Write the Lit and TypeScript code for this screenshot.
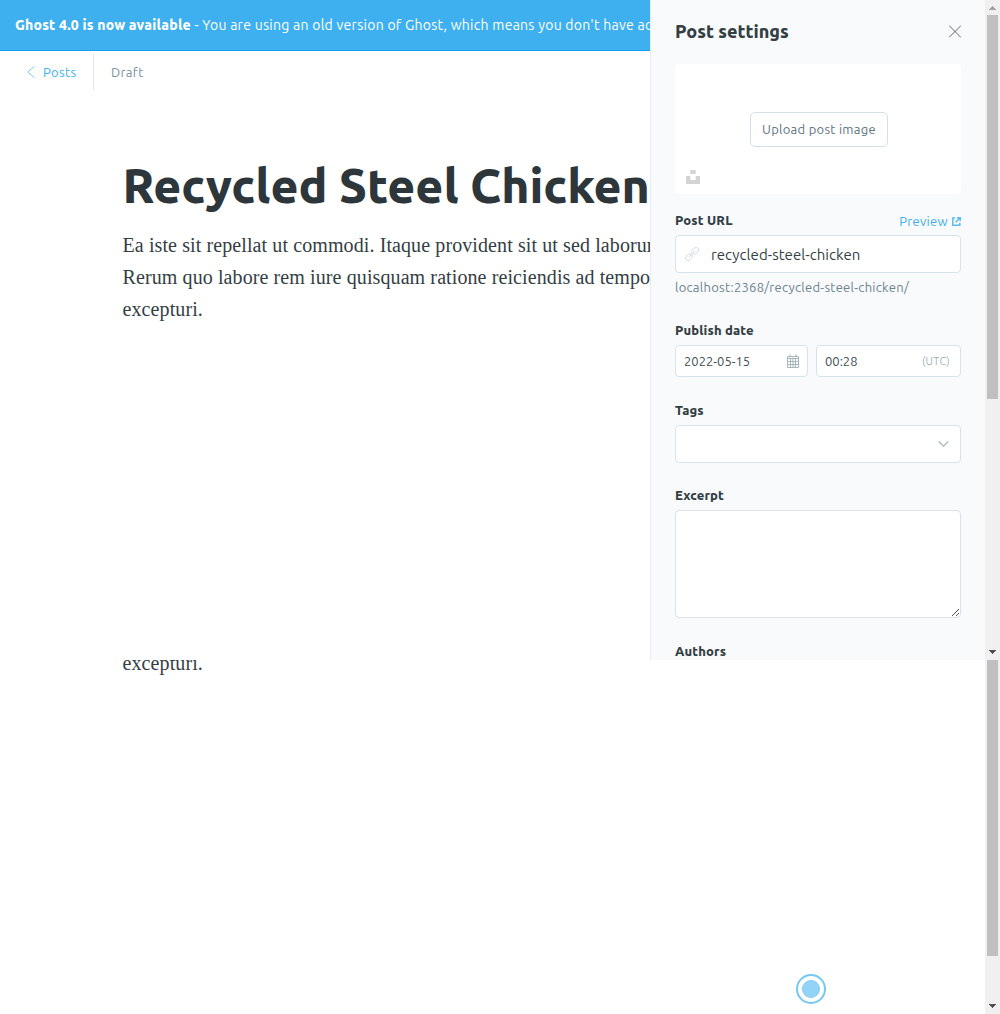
import { LitElement, html, css, svg } from "lit";
import { customElement, property } from "lit/decorators.js";

const LINES = [
  "Ea iste sit repellat ut commodi. Itaque provident sit ut sed laborum.",
  "Rerum quo labore rem iure quisquam ratione reiciendis ad tempora",
  "excepturi.",
];

@customElement("scroll-rail")
export class ScrollRail extends LitElement {
  @property({ type: Boolean }) up = false;
  static styles = css`
    :host { display: flex; flex-direction: column; flex: none; width: 15px; background: #f0f0f0; align-items: center; }
    .cap { width: 15px; height: 15px; flex: none; display: block; }
    .thumb { width: 11px; flex: none; background: #c0c0c0; }
    .long { height: 384px; }
    .rest { height: 296px; }
    .fill { flex: 1; }
  `;
  render() {
    return html`
      ${this.up
        ? html`<svg class="cap" viewBox="0 0 15 15" shape-rendering="crispEdges"><path d="M7 6h1v1h1v1h1v1h1v1H4V9h1V8h1V7h1z" fill="#a3a3a3" /></svg>`
        : ""}
      <div class="thumb ${this.up ? "long" : "rest"}"></div>
      <div class="fill"></div>
      <svg class="cap" viewBox="0 0 15 15" shape-rendering="crispEdges"><path d="M4 5h7v1h-1v1H9v1H8v1H7V8H6V7H5V6H4z" fill="#505050" /></svg>
    `;
  }
}

@customElement("settings-panel")
export class SettingsPanel extends LitElement {
  static styles = css`
    :host { display: block; box-sizing: border-box; width: 335px; flex: none; height: 660px; overflow: hidden; background: #f9fafc; border-left: 1px solid #e3eef7; padding: 0 24px; color: #343f44; font-size: 13px; letter-spacing: 0.27px; }
    * { box-sizing: border-box; }
    svg { display: block; flex: none; }
    .head { display: flex; align-items: center; justify-content: space-between; height: 64px; padding-bottom: 2px; }
    .head h2 { margin: 0; font-size: 18px; font-weight: 800; line-height: 24px; letter-spacing: 0; }
    .upload { height: 130px; background: #fff; border-radius: 4px; display: grid; place-items: center; grid-template: 1fr / 1fr; }
    .upload > * { grid-area: 1 / 1; }
    .btn { width: 138px; height: 35px; margin-left: 2px; border: 1px solid #d3e0e7; border-radius: 5px; background: #fff; color: #5f757f; text-align: center; line-height: 33px; white-space: nowrap; }
    .unsplash { place-self: end start; margin: 0 0 10px 11px; }
    .row { display: flex; justify-content: space-between; }
    .label { font-weight: 800; line-height: 20px; height: 25px; letter-spacing: 0.15px; }
    .first { margin-top: 16px; }
    .preview { display: flex; gap: 4px; color: #3eb0ef; line-height: 22px; height: 25px; letter-spacing: 0.32px; }
    .preview svg { margin-top: 7px; }
    .field { background: #fff; border: 1px solid #d6e3eb; border-radius: 4px; display: flex; align-items: center; }
    .tall { height: 38px; }
    .url { padding-left: 9px; gap: 12px; font-size: 15px; letter-spacing: 0.06px; }
    .hint { line-height: 20px; margin-top: 4px; color: #6c838e; letter-spacing: 0.28px; }
    .gap { margin-top: 23px; }
    .excerpt { margin-top: 22px; }
    .short { height: 32px; padding: 0 8px; justify-content: space-between; letter-spacing: 0; color: #414e55; }
    .date { width: 133px; padding-right: 7px; }
    .time { width: 145px; padding-right: 10px; }
    .utc { font-size: 11px; font-weight: 300; color: #98a7af; letter-spacing: 0.25px; }
    .tags { justify-content: flex-end; padding-right: 11px; }
    .area { height: 108px; align-items: flex-end; justify-content: flex-end; }
  `;
  render() {
    return html`
      <div class="head">
        <h2>Post settings</h2>
        <svg width="12" height="13" viewBox="0 0 12 13" fill="none" stroke="#5d676d" stroke-width="1"><path d="M0 .5l12 12M12 .5l-12 12" /></svg>
      </div>
      <div class="upload">
        <div class="btn">Upload post image</div>
        <svg class="unsplash" width="14" height="14" viewBox="0 0 14 14" fill="#d4d4d4"><path d="M4.300 0h5.400v4H4.300zM0 6.100h4.300v4h5.400v-4H14V14H0z" /></svg>
      </div>
      <div class="row first">
        <div class="label">Post URL</div>
        <div class="preview">
          <span>Preview</span>
          <svg width="9" height="9" viewBox="0 0 9 9" fill="none" stroke="#5cbcf1" stroke-width="1.5"><path d="M3 1H.8v7.200h7V5.800M3.600 5.300L7.400 1.500M5 .8h3.200V4" /></svg>
        </div>
      </div>
      <div class="field tall url">
        <svg width="14" height="14" viewBox="0 0 14 14" fill="none" stroke="#c3d4de" stroke-width=".75">
          <g transform="rotate(-45 7 7)"><rect x="-1.200" y="4.600" width="7.400" height="4.800" rx="2" /><rect x="7.800" y="4.600" width="7.400" height="4.800" rx="2" /><path d="M3 7h8" /></g>
        </svg>
        <span>recycled-steel-chicken</span>
      </div>
      <div class="hint">localhost:2368/recycled-steel-chicken/</div>
      <div class="label gap">Publish date</div>
      <div class="row">
        <div class="field short date">
          <span>2022-05-15</span>
          <svg width="14" height="14" viewBox="0 0 14 14" fill="none" stroke="#9cabb4" stroke-width=".85">
            <path d="M1.500 2.500h11v11h-11zM1.500 4.500h11M1.500 7.500h11M1.500 10.500h11M4.500 4.500v9M7 4.500v9M9.500 4.500v9M4 .3v3M10 .3v3" />
          </svg>
        </div>
        <div class="field short time"><span>00:28</span><span class="utc">(UTC)</span></div>
      </div>
      <div class="label gap">Tags</div>
      <div class="field tall tags">
        <svg width="11" height="6" viewBox="0 0 11 6" fill="none" stroke="#a3b3bd" stroke-width="1.1"><path d="M.8 .5l4.700 4.700L10.200 .5" /></svg>
      </div>
      <div class="label excerpt">Excerpt</div>
      <div class="field area">
        <svg width="9" height="9" viewBox="0 0 9 9" fill="#505050" shape-rendering="crispEdges">
          ${[0, 1, 2, 3, 4, 5, 6].map((i) => svg`<rect x=${1 + i} y=${7 - i} width="1" height="1" />`)}
          ${[0, 1, 2].map((i) => svg`<rect x=${5 + i} y=${7 - i} width="1" height="1" />`)}
        </svg>
      </div>
      <div class="label gap">Authors</div>
    `;
  }
}

@customElement("app-root")
export class AppRoot extends LitElement {
  static styles = css`
    :host { display: block; width: 1000px; height: 1014px; overflow: hidden; background: #fff; font-family: "Ubuntu", "Noto Sans", sans-serif; }
    * { box-sizing: border-box; }
    svg { display: block; flex: none; }
    .frame { display: flex; width: 1000px; overflow: hidden; }
    .top { height: 660px; }
    .bottom { height: 354px; }
    .main { width: 650px; flex: none; overflow: hidden; white-space: nowrap; }
    .banner { height: 51px; background: #3eb0ef; border-bottom: 1px solid #159ff0; color: #fff; font-size: 14px; line-height: 50px; padding-left: 15px; letter-spacing: 0.27px; }
    .banner b { font-weight: 800; letter-spacing: 0.19px; }
    .bar { display: flex; height: 39px; font-size: 13px; letter-spacing: 0.36px; line-height: 36px; padding: 3px 0 0 27px; }
    .back { display: flex; align-items: center; gap: 8px; width: 67px; height: 36px; color: #3eb0ef; border-right: 1px solid #dfe8ef; }
    .state { padding-left: 17px; color: #7c939e; }
    h1 { margin: 67px 0 0 122.5px; font-size: 48px; line-height: 56px; font-weight: 800; color: #2d363b; }
    .body { font-family: "Liberation Serif", serif; font-size: 20px; line-height: 32px; color: #343e44; letter-spacing: 0.1px; }
    .lines { margin: 16px 0 0 122.5px; }
    .rest { width: 985px; display: flex; flex-direction: column; justify-content: space-between; }
    .tail { margin: -13px 0 0 122.5px; }
    .pulse { align-self: flex-end; width: 30px; height: 30px; margin: 0 159px 10px 0; border: 2px solid #74c8f3; border-radius: 50%; display: grid; place-items: center; }
    .dot { width: 18px; height: 18px; border-radius: 50%; background: #93d3f5; border: 1px solid #84cdf4; }
  `;
  render() {
    return html`
      <div class="frame top">
        <div class="main">
          <div class="banner"><b>Ghost 4.0 is now available</b> - You are using an old version of Ghost, which means you don't have access</div>
          <div class="bar">
            <div class="back">
              <svg width="8" height="12" viewBox="0 0 8 12" fill="none" stroke="#7cc9f4" stroke-width="1"><path d="M7.500 .3L.8 6l6.700 5.700" /></svg>
              <span>Posts</span>
            </div>
            <div class="state">Draft</div>
          </div>
          <h1>Recycled Steel Chicken</h1>
          <div class="body lines">${LINES.map((l) => html`<div>${l}</div>`)}</div>
        </div>
        <settings-panel></settings-panel>
        <scroll-rail up></scroll-rail>
      </div>
      <div class="frame bottom">
        <div class="rest">
          <div class="body tail">${LINES[2]}</div>
          <div class="pulse"><div class="dot"></div></div>
        </div>
        <scroll-rail></scroll-rail>
      </div>
    `;
  }
}
